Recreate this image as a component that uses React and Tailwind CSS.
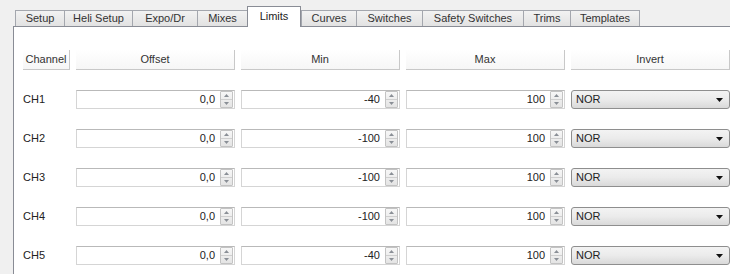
import React from "react";

const tabs = [
  { label: "Setup", w: 49 },
  { label: "Heli Setup", w: 68 },
  { label: "Expo/Dr", w: 65 },
  { label: "Mixes", w: 50 },
  { label: "Limits", w: 54, active: true },
  { label: "Curves", w: 55 },
  { label: "Switches", w: 66 },
  { label: "Safety Switches", w: 101 },
  { label: "Trims", w: 47 },
  { label: "Templates", w: 70, last: true },
];

const rows = [
  { ch: "CH1", off: "0,0", min: "-40", max: "100" },
  { ch: "CH2", off: "0,0", min: "-100", max: "100" },
  { ch: "CH3", off: "0,0", min: "-100", max: "100" },
  { ch: "CH4", off: "0,0", min: "-100", max: "100" },
  { ch: "CH5", off: "0,0", min: "-40", max: "100" },
];

function Spinner() {
  return (
    <div className="flex flex-col w-[13px] h-[17px] mr-px border border-[#c3c3c3] rounded-[1px] bg-gradient-to-b from-[#f7f7f7] to-[#e4e4e4]">
      <div className="flex-1 flex items-center justify-center border-b border-[#cfcfcf]">
        <svg width="5" height="3" viewBox="0 0 5 3"><path d="M0 3 L2.5 0 L5 3 Z" fill="#8a8f96" /></svg>
      </div>
      <div className="flex-1 flex items-center justify-center">
        <svg width="5" height="3" viewBox="0 0 5 3"><path d="M0 0 L2.5 3 L5 0 Z" fill="#8a8f96" /></svg>
      </div>
    </div>
  );
}

function SpinBox({ value }) {
  return (
    <div className="h-[19px] flex items-center bg-white border border-[#d5d5d5] border-t-[#b9b9b9]">
      <div className="flex-1 text-right pr-[5px] text-[#222]">{value}</div>
      <Spinner />
    </div>
  );
}

function Combo() {
  return (
    <div className="h-[19px] flex items-center border border-[#8e8e8e] rounded-[3px] bg-gradient-to-b from-[#f3f3f3] via-[#ebebeb] to-[#d9d9d9] pl-[4px] pr-[6px]">
      <div className="flex-1 text-[#222]">NOR</div>
      <svg width="7" height="4" viewBox="0 0 7 4"><path d="M0 0 L7 0 L3.5 4 Z" fill="#111" /></svg>
    </div>
  );
}

function Header({ children }) {
  return (
    <div className="h-[20px] flex items-center justify-center border-r border-b border-[#c8c8c8] bg-gradient-to-b from-white to-[#f6f6f6] text-[#333]">
      {children}
    </div>
  );
}

export default function App() {
  return (
    <div
      className="w-[730px] h-[274px] overflow-hidden bg-[#f0f0f0] flex text-[11px] leading-none"
      style={{ fontFamily: '"Liberation Sans", Arial, sans-serif' }}
    >
      <div className="ml-[2px] w-px bg-[#8c8c8c]" />
      <div className="ml-[11px] flex-1 flex flex-col">
        <div className="h-[26px] flex items-end pl-[2px]">
          {tabs.map((t) =>
            t.active ? (
              <div
                key={t.label}
                style={{ width: t.w }}
                className="relative z-10 h-[21px] -mb-px bg-white border-l border-t border-r border-[#898c95] flex items-start justify-center pt-[4px] text-[#222]"
              >
                {t.label}
              </div>
            ) : (
              <div
                key={t.label}
                style={{ width: t.w }}
                className={
                  "h-[16px] bg-gradient-to-b from-[#f2f2f2] to-[#e2e2e2] border-t border-l border-[#a4a7ae] flex items-center justify-center text-[#333] " +
                  (t.last ? "border-r" : "")
                }
              >
                {t.label}
              </div>
            )
          )}
        </div>
        <div className="flex-1 bg-white border-l border-t border-[#898c95] pt-[23px] pl-[9px]">
          <div className="grid grid-cols-[47px_159px_159px_159px_159px] gap-x-[6px]">
            <Header>Channel</Header>
            <Header>Offset</Header>
            <Header>Min</Header>
            <Header>Max</Header>
            <Header>Invert</Header>
          </div>
          <div className="mt-[20px] flex flex-col gap-[20px]">
            {rows.map((r) => (
              <div key={r.ch} className="grid grid-cols-[47px_159px_159px_159px_159px] gap-x-[6px] items-center">
                <div className="text-[#222]">{r.ch}</div>
                <SpinBox value={r.off} />
                <SpinBox value={r.min} />
                <SpinBox value={r.max} />
                <Combo />
              </div>
            ))}
          </div>
        </div>
      </div>
    </div>
  );
}
